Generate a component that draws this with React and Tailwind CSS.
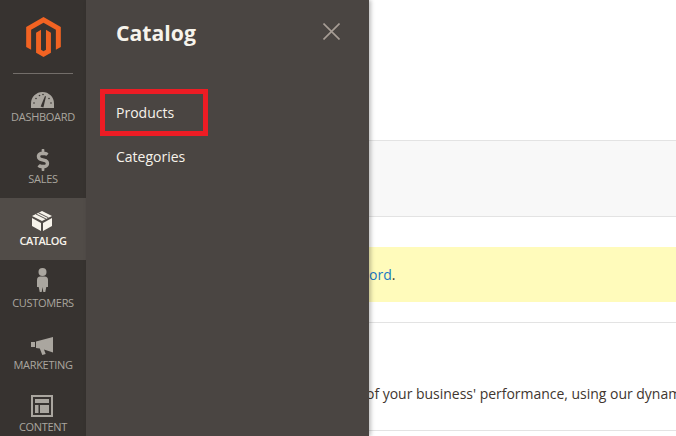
import { FaDollarSign } from "react-icons/fa";

function MagentoLogo() {
  return (
    <svg viewBox="1.6 0 20.8 24" className="w-[35px] h-[41px]" fill="#f26322">
      <path d="M12 24l-4.455-2.572v-12l2.97-1.715v12.001l1.485.902 1.485-.902V7.713l2.97 1.715v12L12 24zM22.391 6v12l-2.969 1.714V7.713L12 3.43 4.574 7.713v12.001L1.609 18V6L12 0l10.391 6z" />
    </svg>
  );
}

function Gauge() {
  return (
    <svg viewBox="0 0 36 26" className="w-[36px] h-[26px]" fill="currentColor">
      <path d="M6 23v-4.5A11.5 11.5 0 0 1 29 18.500V23z" />
      <path d="M15.600 21.500l4.400-10.500 1 .4-2.600 11z" fill="#373330" />
      <g fill="#373330">
        <circle cx="9" cy="18" r="0.8" />
        <circle cx="11" cy="13.500" r="0.8" />
        <circle cx="14.500" cy="10.500" r="0.8" />
        <circle cx="18" cy="9.500" r="0.8" />
        <circle cx="24" cy="13.500" r="0.8" />
        <circle cx="26" cy="18" r="0.8" />
      </g>
    </svg>
  );
}

function Box() {
  return (
    <svg viewBox="0 0 36 26" className="w-[36px] h-[26px]" fill="currentColor">
      <path d="M17 2l10 5-10 5-10-5z" />
      <path d="M7 9l9 5v8l-9-5z" />
      <path d="M18 14l9-5v8l-9 5z" />
      <path d="M11 5l10 5M13.500 3.800l10 5" stroke="#4a4542" strokeWidth="0.9" fill="none" />
    </svg>
  );
}

function Person() {
  return (
    <svg viewBox="0 0 36 26" className="w-[36px] h-[26px] overflow-visible" fill="currentColor">
      <circle cx="17.500" cy="1" r="4" />
      <path d="M15.300 5.500h4.400q3.300 0 3.300 3.500v7h-1.700l-1 5h-2l-.8-5-.8 5h-2l-1-5H12V9q0-3.500 3.300-3.500z" />
    </svg>
  );
}

function Horn() {
  return (
    <svg viewBox="0 0 36 26" className="w-[36px] h-[26px]" fill="currentColor">
      <path d="M6 9h4v5H6z" />
      <path d="M11 8.500L28 4v15.500l-9-3 1.700 4.500-3.400 1-2.500-6.500-3.800-.5z" />
    </svg>
  );
}

function Layout() {
  return (
    <svg viewBox="0 0 36 26" className="w-[36px] h-[26px]" fill="currentColor">
      <path fillRule="evenodd" d="M6 0h22v22H6zM8 2v18h18V2z" />
      <path d="M10 4h14v4H10zM10 10h3.500v8H10zM15 10h9v8h-9z" />
    </svg>
  );
}

function NavItem({ icon, label, active }) {
  return (
    <div className={`h-[62px] shrink-0 flex flex-col items-center pt-[11px] ${active ? "bg-[#514c48] text-[#f7f3eb] font-semibold" : "text-[#aaa69f]"}`}>
      {icon}
      <span className={`text-[11px] leading-[12px] whitespace-nowrap ${active ? "tracking-[-0.5px]" : "tracking-[-0.3px]"}`}>{label}</span>
    </div>
  );
}

export default function App() {
  return (
    <div className="h-[436px] w-[676px] flex overflow-hidden bg-white font-['Open_Sans',sans-serif]">
      <aside className="w-[86px] shrink-0 bg-[#373330] flex flex-col overflow-hidden">
        <div className="h-[74px] shrink-0 flex flex-col items-center pt-[17px]">
          <MagentoLogo />
          <div className="w-[60px] h-px shrink-0 mt-[16px] bg-[#736e6a]" />
        </div>
        <NavItem icon={<Gauge />} label="DASHBOARD" />
        <NavItem
          icon={
            <div className="h-[26px] w-[36px] flex justify-center pt-[2px]">
              <FaDollarSign className="w-[14px] h-[22px]" />
            </div>
          }
          label="SALES"
        />
        <NavItem icon={<Box />} label="CATALOG" active />
        <NavItem icon={<Person />} label="CUSTOMERS" />
        <NavItem icon={<Horn />} label="MARKETING" />
        <NavItem icon={<Layout />} label="CONTENT" />
      </aside>

      <div className="relative z-10 w-[283px] shrink-0 bg-[#4a4542] shadow-[2px_0_4px_rgba(0,0,0,0.25)] flex flex-col text-[#f7f3eb]">
        <div className="h-[89px] shrink-0 flex justify-between pl-[30px] pr-[29px]">
          <h2 className="text-[21.200px] leading-[30px] font-bold mt-[18px]">Catalog</h2>
          <svg viewBox="0 0 17 17" className="w-[17px] h-[17px] mt-[23px]" stroke="#a79d95" strokeWidth="1.6" fill="none">
            <path d="M0.500 0.500l16 16M16.500 0.500l-16 16" />
          </svg>
        </div>
        <div className="ml-[14px] w-[108px] h-[47px] border-[5px] border-[#ed1c24] pl-[11px] flex items-center text-[14px] font-medium">
          Products
        </div>
        <div className="ml-[30px] mt-[11px] h-[20px] leading-[20px] text-[14px] font-medium">Categories</div>
      </div>

      <main className="flex-1 min-w-0 overflow-hidden flex flex-col text-[14px] text-[#41362f]">
        <div className="h-[141px] shrink-0 border-b border-[#e3e3e3]" />
        <div className="h-[76px] shrink-0 bg-[#f8f8f8] border-b border-[#e3e3e3]" />
        <div className="h-[30px] shrink-0" />
        <div className="h-[55px] shrink-0 bg-[#fffbbb] flex items-center whitespace-nowrap">
          <span><span className="text-[#1979c3]">ord</span>.</span>
        </div>
        <div className="h-[21px] shrink-0 border-b border-[#e3e3e3]" />
        <div className="h-[108px] shrink-0 border-b border-[#e3e3e3] pt-[61px] whitespace-nowrap">
          <p className="-ml-[3px] leading-[20px] tracking-[-0.02px]">of your business' performance, using our dynamic</p>
        </div>
      </main>
    </div>
  );
}
